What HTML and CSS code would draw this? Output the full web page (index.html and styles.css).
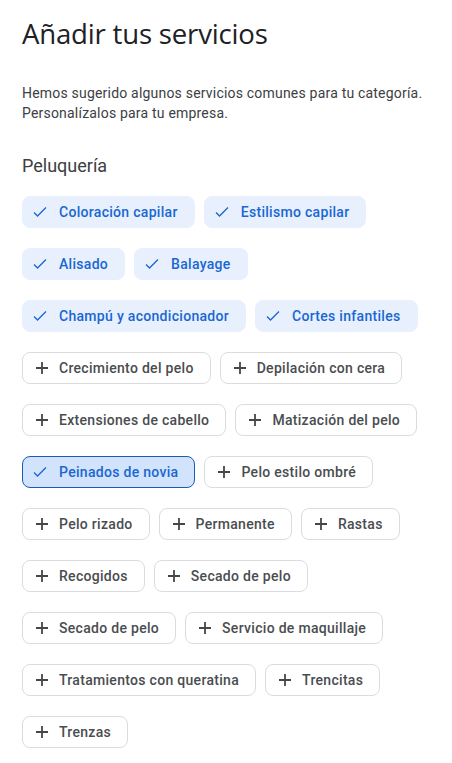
FILE: index.html
```html
<!DOCTYPE html>
<html lang="es">
<head>
<meta charset="utf-8">
<title>Añadir tus servicios</title>
<link rel="stylesheet" href="styles.css">
</head>
<body>
<main class="page">
  <h1 class="title">Añadir tus servicios</h1>
  <p class="intro">Hemos sugerido algunos servicios comunes para tu categoría.<br>Personalízalos para tu empresa.</p>
  <h2 class="section">Peluquería</h2>
  <div class="chips">
    <div class="row">
      <span class="chip chip-on"><svg class="ico" viewBox="0 0 18 18"><path d="M3 9.5l3.5 3.5L15 4.5"/></svg>Coloración capilar</span>
      <span class="chip chip-on"><svg class="ico" viewBox="0 0 18 18"><path d="M3 9.5l3.5 3.5L15 4.5"/></svg>Estilismo capilar</span>
    </div>
    <div class="row">
      <span class="chip chip-on"><svg class="ico" viewBox="0 0 18 18"><path d="M3 9.5l3.5 3.5L15 4.5"/></svg>Alisado</span>
      <span class="chip chip-on"><svg class="ico" viewBox="0 0 18 18"><path d="M3 9.5l3.5 3.5L15 4.5"/></svg>Balayage</span>
    </div>
    <div class="row">
      <span class="chip chip-on"><svg class="ico" viewBox="0 0 18 18"><path d="M3 9.5l3.5 3.5L15 4.5"/></svg>Champú y acondicionador</span>
      <span class="chip chip-on"><svg class="ico" viewBox="0 0 18 18"><path d="M3 9.5l3.5 3.5L15 4.5"/></svg>Cortes infantiles</span>
    </div>
    <div class="row">
      <span class="chip"><svg class="ico plus" viewBox="0 0 18 18"><path d="M9 3v12M3 9h12"/></svg>Crecimiento del pelo</span>
      <span class="chip"><svg class="ico plus" viewBox="0 0 18 18"><path d="M9 3v12M3 9h12"/></svg>Depilación con cera</span>
    </div>
    <div class="row">
      <span class="chip"><svg class="ico plus" viewBox="0 0 18 18"><path d="M9 3v12M3 9h12"/></svg>Extensiones de cabello</span>
      <span class="chip"><svg class="ico plus" viewBox="0 0 18 18"><path d="M9 3v12M3 9h12"/></svg>Matización del pelo</span>
    </div>
    <div class="row">
      <span class="chip chip-active"><svg class="ico" viewBox="0 0 18 18"><path d="M3 9.5l3.5 3.5L15 4.5"/></svg>Peinados de novia</span>
      <span class="chip"><svg class="ico plus" viewBox="0 0 18 18"><path d="M9 3v12M3 9h12"/></svg>Pelo estilo ombré</span>
    </div>
    <div class="row">
      <span class="chip"><svg class="ico plus" viewBox="0 0 18 18"><path d="M9 3v12M3 9h12"/></svg>Pelo rizado</span>
      <span class="chip"><svg class="ico plus" viewBox="0 0 18 18"><path d="M9 3v12M3 9h12"/></svg>Permanente</span>
      <span class="chip"><svg class="ico plus" viewBox="0 0 18 18"><path d="M9 3v12M3 9h12"/></svg>Rastas</span>
    </div>
    <div class="row">
      <span class="chip"><svg class="ico plus" viewBox="0 0 18 18"><path d="M9 3v12M3 9h12"/></svg>Recogidos</span>
      <span class="chip"><svg class="ico plus" viewBox="0 0 18 18"><path d="M9 3v12M3 9h12"/></svg>Secado de pelo</span>
    </div>
    <div class="row">
      <span class="chip"><svg class="ico plus" viewBox="0 0 18 18"><path d="M9 3v12M3 9h12"/></svg>Secado de pelo</span>
      <span class="chip"><svg class="ico plus" viewBox="0 0 18 18"><path d="M9 3v12M3 9h12"/></svg>Servicio de maquillaje</span>
    </div>
    <div class="row">
      <span class="chip"><svg class="ico plus" viewBox="0 0 18 18"><path d="M9 3v12M3 9h12"/></svg>Tratamientos con queratina</span>
      <span class="chip"><svg class="ico plus" viewBox="0 0 18 18"><path d="M9 3v12M3 9h12"/></svg>Trencitas</span>
    </div>
    <div class="row">
      <span class="chip"><svg class="ico plus" viewBox="0 0 18 18"><path d="M9 3v12M3 9h12"/></svg>Trenzas</span>
    </div>
  </div>
</main>
</body>
</html>
```
FILE: styles.css
```css
* { box-sizing: border-box; }
html, body { margin: 0; padding: 0; background: #fff; }
body {
  font-family: Roboto, "Noto Sans", "Liberation Sans", sans-serif;
  color: #202124;
}
.page { padding: 15px 22px 0 22px; }
.title {
  margin: 0;
  font-family: "Open Sans", Roboto, sans-serif;
  font-weight: 400;
  font-size: 27.6px;
  line-height: 36px;
  color: #202124;
  letter-spacing: -0.2px;
}
.intro {
  margin: 32px 0 0 0;
  font-size: 14px;
  line-height: 20px;
  letter-spacing: 0.2px;
  color: #3c4043;
}
.section {
  margin: 31px 0 0 0;
  font-size: 18px;
  font-weight: 400;
  line-height: 24px;
  color: #3c4043;
}
.chips {
  display: flex;
  flex-direction: column;
  row-gap: 20px;
  margin-top: 18px;
}
.row {
  display: flex;
  column-gap: 9px;
}
.chip {
  display: inline-flex;
  align-items: center;
  height: 32px;
  padding: 0 16px 0 8px;
  border: 1px solid #dadce0;
  border-radius: 8px;
  background: #fff;
  font-size: 14px;
  font-weight: 500;
  letter-spacing: 0.3px;
  color: #4a4d50;
  white-space: nowrap;
}
.chip-on {
  background: #e8f0fe;
  border-color: #e8f0fe;
  color: #1967d2;
}
.chip-active {
  background: #d2e3fc;
  border-color: #1a5bb8;
  color: #1967d2;
}
.ico {
  width: 18px;
  height: 18px;
  margin-right: 10px;
  fill: none;
  stroke: #1967d2;
  stroke-width: 1.3;
  flex: none;
}
.ico.plus {
  stroke: #444746;
  stroke-width: 1.8;
  margin-left: 2px;
  margin-right: 8px;
}
```
